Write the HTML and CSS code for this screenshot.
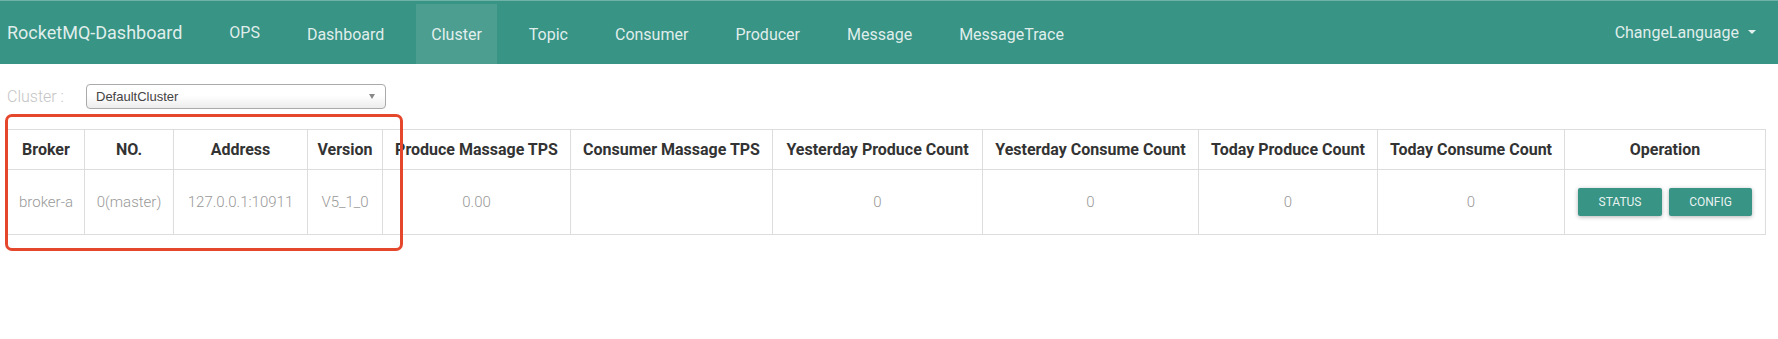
FILE: index.html
```html
<!DOCTYPE html>
<html lang="en">

<head>
    <meta charset="UTF-8" />
    <meta name="viewport" content="width=device-width, initial-scale=1.0" />
    <title>RocketMQ-Dashboard - Cluster</title>
    <link rel="stylesheet" href="styles.css">
</head>

<body>
    <header>
        <nav class="navbar">
            <a class="brand" href="#">RocketMQ-Dashboard</a>
            <ul class="nav">
                <li class="ops"><a href="#">OPS</a></li>
                <li><a href="#">Dashboard</a></li>
                <li class="active"><a href="#">Cluster</a></li>
                <li><a href="#">Topic</a></li>
                <li><a href="#">Consumer</a></li>
                <li><a href="#">Producer</a></li>
                <li><a href="#">Message</a></li>
                <li><a href="#">MessageTrace</a></li>
            </ul>
            <div class="lang">ChangeLanguage <span class="caret"></span></div>
        </nav>
    </header>

    <main class="page">
        <div class="filter">
            <label>Cluster :</label>
            <div class="select">
                <span>DefaultCluster</span>
                <b class="arrow"></b>
            </div>
        </div>

        <div class="table-wrap">
            <table class="cluster-table">
                <colgroup>
                    <col style="width: 77px">
                    <col style="width: 89px">
                    <col style="width: 134px">
                    <col style="width: 75px">
                    <col style="width: 188px">
                    <col style="width: 202px">
                    <col style="width: 210px">
                    <col style="width: 216px">
                    <col style="width: 179px">
                    <col style="width: 187px">
                    <col style="width: 201px">
                </colgroup>
                <thead>
                    <tr>
                        <th>Broker</th>
                        <th>NO.</th>
                        <th>Address</th>
                        <th>Version</th>
                        <th>Produce Massage TPS</th>
                        <th>Consumer Massage TPS</th>
                        <th>Yesterday Produce Count</th>
                        <th>Yesterday Consume Count</th>
                        <th>Today Produce Count</th>
                        <th>Today Consume Count</th>
                        <th>Operation</th>
                    </tr>
                </thead>
                <tbody>
                    <tr>
                        <td>broker-a</td>
                        <td>0(master)</td>
                        <td>127.0.0.1:10911</td>
                        <td>V5_1_0</td>
                        <td>0.00</td>
                        <td></td>
                        <td>0</td>
                        <td>0</td>
                        <td>0</td>
                        <td>0</td>
                        <td>
                            <div class="ops-buttons">
                                <button class="btn">STATUS</button>
                                <button class="btn">CONFIG</button>
                            </div>
                        </td>
                    </tr>
                </tbody>
            </table>

            <!-- annotation box drawn over the first columns -->
            <div class="mark"></div>
        </div>
    </main>
</body>

</html>
```

FILE: styles.css
```css
* {
    margin: 0;
    padding: 0;
    box-sizing: border-box;
}

html,
body {
    min-height: 100%;
}

body {
    font-family: Roboto, 'Liberation Sans', sans-serif;
    background-color: #fff;
    color: #333;
}

/* Navbar */
.navbar {
    display: flex;
    align-items: stretch;
    height: 64px;
    padding-top: 3px;
    background-color: #389485;
    border-top: 1px solid #6fb3a8;
}

.brand {
    display: flex;
    align-items: center;
    padding: 0 32px 4px 7px;
    color: rgba(255, 255, 255, 0.86);
    font-size: 18px;
    text-decoration: none;
}

.nav {
    list-style: none;
    display: flex;
    gap: 17px;
}

.nav li a {
    display: flex;
    align-items: center;
    height: 100%;
    padding: 0 15px;
    color: rgba(255, 255, 255, 0.86);
    font-size: 16px;
    text-decoration: none;
}

.nav li.ops a {
    padding-bottom: 4px;
}

.nav li.active a {
    background-color: rgba(255, 255, 255, 0.1);
}

.lang {
    margin-left: auto;
    display: flex;
    align-items: center;
    padding: 0 22px 4px 0;
    color: rgba(255, 255, 255, 0.86);
    font-size: 16px;
}

.caret {
    display: inline-block;
    margin-left: 9px;
    border-top: 4px solid rgba(255, 255, 255, 0.86);
    border-left: 4px solid transparent;
    border-right: 4px solid transparent;
}

/* Content */
.page {
    padding: 20px 0 80px 7px;
}

.filter {
    display: flex;
    align-items: center;
}

.filter label {
    width: 79px;
    color: #c4c4c4;
    font-size: 16px;
    font-weight: 300;
}

.select {
    display: flex;
    align-items: center;
    justify-content: space-between;
    width: 300px;
    height: 25px;
    padding: 0 10px 0 9px;
    border: 1px solid #aaa;
    border-radius: 4px;
    background: linear-gradient(#fff 45%, #ececec);
    font-family: 'Liberation Sans', Arial, sans-serif;
    font-size: 13px;
    color: #444;
}

.arrow {
    border-top: 5px solid #888;
    border-left: 3.5px solid transparent;
    border-right: 3.5px solid transparent;
}

.table-wrap {
    position: relative;
    margin-top: 20px;
}

.cluster-table {
    width: 1758px;
    table-layout: fixed;
    border-collapse: collapse;
    border: 1px solid #ddd;
}

.cluster-table th,
.cluster-table td {
    border: 1px solid #ddd;
    padding: 8px;
    text-align: center;
    vertical-align: middle;
    white-space: nowrap;
}

.cluster-table th {
    height: 40px;
    font-size: 16px;
    font-weight: bold;
    color: #333;
}

.cluster-table td {
    height: 65px;
    font-size: 15px;
    font-weight: 300;
    color: #999;
}

.ops-buttons {
    display: flex;
    justify-content: center;
    gap: 7px;
    margin: 10px 0;
}

.btn {
    height: 28px;
    width: 84px;
    border: none;
    border-radius: 2px;
    background-color: #389485;
    color: rgba(255, 255, 255, 0.9);
    font-family: Roboto, sans-serif;
    font-size: 12px;
    box-shadow: 0 1px 4px rgba(0, 0, 0, 0.3);
}

.btn + .btn {
    width: 83px;
}

/* red highlight box */
.mark {
    position: absolute;
    left: -2px;
    top: -15px;
    width: 398px;
    height: 137px;
    border: 3px solid #e4472c;
    border-radius: 7px;
    pointer-events: none;
}
```
